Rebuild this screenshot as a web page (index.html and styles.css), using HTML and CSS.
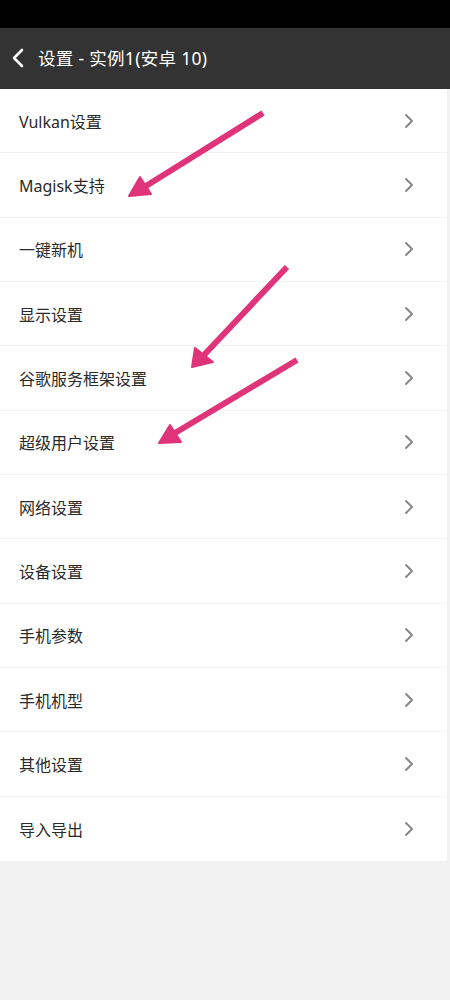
FILE: index.html
```html
<!DOCTYPE html>
<html lang="zh">
<head>
<meta charset="utf-8">
<title>设置</title>
<link rel="stylesheet" href="styles.css">
</head>
<body>
<div class="page">
  <div class="status"></div>
  <header class="bar">
    <svg class="back" width="14" height="20" viewBox="0 0 14 20"><path d="M11 2 L3 10 L11 18" fill="none" stroke="#fff" stroke-width="2.6" stroke-linecap="round" stroke-linejoin="round"/></svg>
    <span class="title">设置 - 实例1(安卓 10)</span>
  </header>
  <ul class="list">
    <li class="row"><span>Vulkan设置</span><svg class="chev" width="10" height="16" viewBox="0 0 10 16"><path d="M2 2 L8 8 L2 14" fill="none" stroke="#868686" stroke-width="1.9" stroke-linecap="round" stroke-linejoin="round"/></svg></li>
    <li class="row"><span>Magisk支持</span><svg class="chev" width="10" height="16" viewBox="0 0 10 16"><path d="M2 2 L8 8 L2 14" fill="none" stroke="#868686" stroke-width="1.9" stroke-linecap="round" stroke-linejoin="round"/></svg></li>
    <li class="row"><span>一键新机</span><svg class="chev" width="10" height="16" viewBox="0 0 10 16"><path d="M2 2 L8 8 L2 14" fill="none" stroke="#868686" stroke-width="1.9" stroke-linecap="round" stroke-linejoin="round"/></svg></li>
    <li class="row"><span>显示设置</span><svg class="chev" width="10" height="16" viewBox="0 0 10 16"><path d="M2 2 L8 8 L2 14" fill="none" stroke="#868686" stroke-width="1.9" stroke-linecap="round" stroke-linejoin="round"/></svg></li>
    <li class="row"><span>谷歌服务框架设置</span><svg class="chev" width="10" height="16" viewBox="0 0 10 16"><path d="M2 2 L8 8 L2 14" fill="none" stroke="#868686" stroke-width="1.9" stroke-linecap="round" stroke-linejoin="round"/></svg></li>
    <li class="row"><span>超级用户设置</span><svg class="chev" width="10" height="16" viewBox="0 0 10 16"><path d="M2 2 L8 8 L2 14" fill="none" stroke="#868686" stroke-width="1.9" stroke-linecap="round" stroke-linejoin="round"/></svg></li>
    <li class="row"><span>网络设置</span><svg class="chev" width="10" height="16" viewBox="0 0 10 16"><path d="M2 2 L8 8 L2 14" fill="none" stroke="#868686" stroke-width="1.9" stroke-linecap="round" stroke-linejoin="round"/></svg></li>
    <li class="row"><span>设备设置</span><svg class="chev" width="10" height="16" viewBox="0 0 10 16"><path d="M2 2 L8 8 L2 14" fill="none" stroke="#868686" stroke-width="1.9" stroke-linecap="round" stroke-linejoin="round"/></svg></li>
    <li class="row"><span>手机参数</span><svg class="chev" width="10" height="16" viewBox="0 0 10 16"><path d="M2 2 L8 8 L2 14" fill="none" stroke="#868686" stroke-width="1.9" stroke-linecap="round" stroke-linejoin="round"/></svg></li>
    <li class="row"><span>手机机型</span><svg class="chev" width="10" height="16" viewBox="0 0 10 16"><path d="M2 2 L8 8 L2 14" fill="none" stroke="#868686" stroke-width="1.9" stroke-linecap="round" stroke-linejoin="round"/></svg></li>
    <li class="row"><span>其他设置</span><svg class="chev" width="10" height="16" viewBox="0 0 10 16"><path d="M2 2 L8 8 L2 14" fill="none" stroke="#868686" stroke-width="1.9" stroke-linecap="round" stroke-linejoin="round"/></svg></li>
    <li class="row"><span>导入导出</span><svg class="chev" width="10" height="16" viewBox="0 0 10 16"><path d="M2 2 L8 8 L2 14" fill="none" stroke="#868686" stroke-width="1.9" stroke-linecap="round" stroke-linejoin="round"/></svg></li>
  </ul>
  <svg class="arrows" width="450" height="1000" viewBox="0 0 450 1000">
    <g fill="#e0347a" stroke="#e0347a" stroke-linejoin="round">
      <line x1="263" y1="113" x2="146" y2="186" stroke-width="6"/>
      <polygon points="129,196 140,177 151,194" stroke-width="2"/>
      <line x1="287" y1="267" x2="204" y2="355" stroke-width="6"/>
      <polygon points="192,367 195,348 213,362" stroke-width="2"/>
      <line x1="297" y1="360" x2="175" y2="433" stroke-width="6"/>
      <polygon points="159,443 170,425 181,442" stroke-width="2"/>
    </g>
  </svg>
</div>
</body>
</html>
```
FILE: styles.css
```css
* { box-sizing: border-box; }
html, body { margin: 0; padding: 0; }
body {
  background: #f2f2f2;
  font-family: "Noto Sans", "Noto Sans CJK SC", sans-serif;
  width: 450px;
  height: 1000px;
  overflow: hidden;
}
.page { position: relative; width: 450px; height: 1000px; }
.status { height: 28px; background: #000; }
.bar {
  height: 61px;
  background: #333333;
  display: flex;
  align-items: center;
  padding-left: 11px;
}
.back { flex: none; margin-right: 13px; margin-top: -2px; }
.title { color: #fff; font-size: 17.5px; font-weight: 400; letter-spacing: 0.3px; margin-top: -2px; }
.list {
  list-style: none;
  margin: 0 3px 0 0;
  padding: 0;
  background: #fff;
}
.row {
  height: 64.33px;
  display: flex;
  align-items: center;
  justify-content: space-between;
  padding: 0 33px 0 19px;
  border-bottom: 1px solid #f2f2f2;
  font-size: 16px;
  color: #2a2a2a;
}
.row:last-child { border-bottom: none; }
.chev { flex: none; }
.arrows { position: absolute; left: 0; top: 0; pointer-events: none; }
```
